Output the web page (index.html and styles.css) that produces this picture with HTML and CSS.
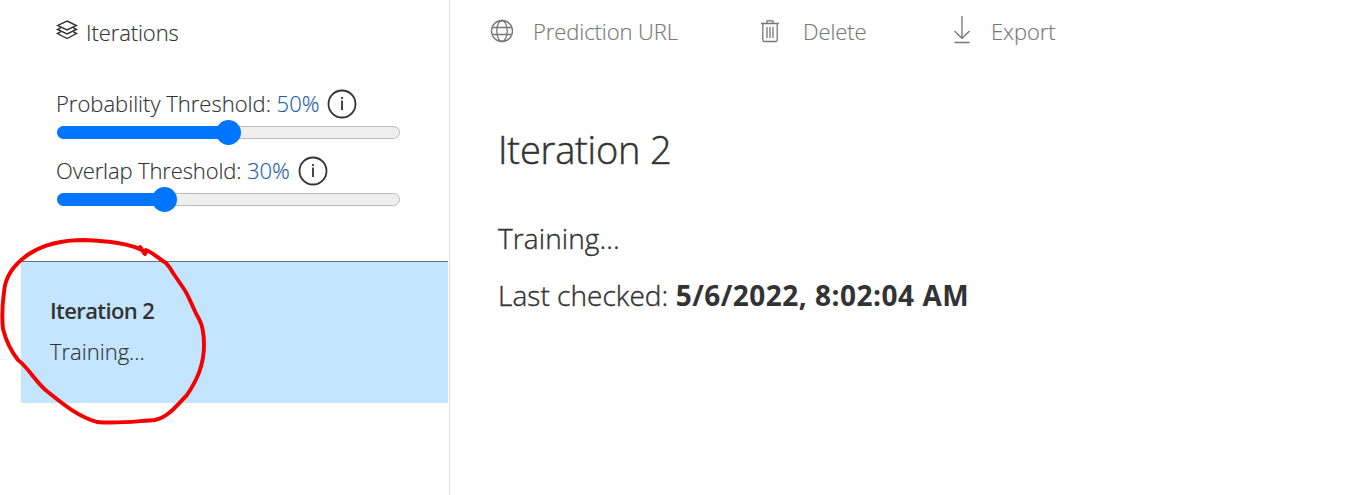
FILE: index.html
```html
<!DOCTYPE html>
<html lang="en">
<head>
<meta charset="utf-8">
<title>Iterations</title>
<link rel="stylesheet" href="styles.css">
</head>
<body>
<div class="app">
  <aside class="sidebar">
    <h2 class="side-title">
      <svg class="layers" width="22" height="20" viewBox="0 0 22 20"><path d="M11 1 20.500 5.500 11 10 1.500 5.500ZM4.500 8 1.500 9.500 11 14 20.500 9.500 17.500 8M4.500 12 1.500 13.500 11 18.500 20.500 13.500 17.500 12"/></svg>
      <span class="t-iterations">Iterations</span>
    </h2>
    <div class="threshold">
      <div class="label"><span class="t-prob">Probability Threshold: <b>50%</b></span>
        <svg class="info" width="30" height="30" viewBox="0 0 30 30"><circle cx="15" cy="15" r="13.500"/><path d="M15 11.500V21M15 8V10"/></svg>
      </div>
      <div class="track"><div class="fill" style="width:50%"></div><div class="thumb" style="left:50%"></div></div>
    </div>
    <div class="threshold">
      <div class="label"><span class="t-over">Overlap Threshold: <b>30%</b></span>
        <svg class="info" width="30" height="30" viewBox="0 0 30 30"><circle cx="15" cy="15" r="13.500"/><path d="M15 11.500V21M15 8V10"/></svg>
      </div>
      <div class="track"><div class="fill" style="width:31.500%"></div><div class="thumb" style="left:31.500%"></div></div>
    </div>
    <div class="card">
      <div class="card-name">Iteration 2</div>
      <div class="card-status">Training...</div>
    </div>
  </aside>
  <main class="main">
    <nav class="toolbar">
      <div class="tool tool-url">
        <svg width="24" height="24" viewBox="0 0 24 24"><circle cx="12" cy="12" r="10.500"/><ellipse cx="12" cy="12" rx="5.200" ry="10.500"/><path d="M2.500 8.500H21.500M2.500 15.500H21.500"/></svg>
        <span class="t-url">Prediction URL</span>
      </div>
      <div class="tool tool-delete">
        <svg width="20" height="24" viewBox="0 0 20 24"><path d="M1 4.500H19M7 4V1.800H13V4M2.800 5V21Q2.800 22.500 4.300 22.500H15.700Q17.200 22.500 17.200 21V5M7 8V19M10 8V19M13 8V19"/></svg>
        <span class="t-delete">Delete</span>
      </div>
      <div class="tool tool-export">
        <svg width="18" height="28" viewBox="0 0 18 28"><path d="M9 0V22M1.500 15 9 22.300 16.500 15M1.500 26.500H16.500"/></svg>
        <span class="t-export">Export</span>
      </div>
    </nav>
    <h1 class="title"><span>Iteration 2</span></h1>
    <p class="status"><span>Training...</span></p>
    <p class="checked"><span class="t-last">Last checked: </span><strong>5/6/2022, 8:02:04 AM</strong></p>
  </main>
  <svg class="mark" width="212" height="192" viewBox="0 236 212 192"><path d="M146 252C130 243 107 241 84 240C62 240 43 245 29 254C14 264 5 277 4 292C2 307 2 320 3 329C6 341 11 351 18 360C28 367 37 384 48 392C63 404 77 416 97 422C118 424 137 421 155 420C169 417 178 404 187 395C197 380 204 365 204 345C204 334 203 326 199 319C193 309 190 298 184 289L173 273L170 268L166 263C158 258 152 252 146 250L145 254L140 247"/></svg>
</div>
</body>
</html>
```
FILE: styles.css
```css
* { box-sizing: border-box; }
body { margin: 0; background: #fff; color: #333; font: 300 22px/30px "Open Sans", "Noto Sans", sans-serif; overflow: hidden; -webkit-text-stroke: 0.15px currentColor; }
svg { fill: none; stroke: currentColor; stroke-width: 1.4; flex: none; }
span, strong, .card-name, .card-status { white-space: pre; }
.app { position: relative; display: flex; width: 1345px; height: 495px; }
.sidebar { width: 450px; flex: none; border-right: 1px solid #ddd; padding: 17px 1px 0 21px; }
.side-title { display: flex; height: 30px; gap: 8px; margin: 0 0 41px; padding-left: 35px; font-size: 22px; font-weight: inherit; }
.layers { margin-top: 3px; }
.t-iterations { letter-spacing: -0.1px; }
.threshold { height: 67px; padding-left: 35px; }
.label { display: flex; gap: 8px; height: 30px; }
.label b { color: #1b5da8; font-weight: inherit; }
.info { stroke-width: 1.8; margin-top: 1px; }
.t-prob { letter-spacing: 0; }
.t-over { letter-spacing: -0.120px; }
.track { position: relative; width: 343px; height: 13px; margin: 8px 0 0 0.500px; border: 1px solid #bcbcbc; border-radius: 7px; background: #efefef; }
.fill { height: 13px; margin: -1px 0 0 -1px; border-radius: 7px; background: #0075ff; }
.thumb { position: absolute; top: -7px; width: 25px; height: 25px; margin-left: -12.500px; border-radius: 50%; background: #0075ff; }
.card { height: 142px; margin-top: 39px; padding: 33px 29px; border-top: 1px solid #66727b; background: #c3e5ff; }
.card-name { font-weight: 600; letter-spacing: -0.6px; margin-bottom: 11px; -webkit-text-stroke: 0; }
.card-status { letter-spacing: 0; }
.main { flex: 1; padding: 16px 0 0 48px; }
.toolbar { display: flex; height: 30px; margin-left: -8px; color: #777; }
.tool { display: flex; align-items: center; }
.tool-url { width: 270px; gap: 19px; }
.tool-delete { width: 193px; gap: 23px; }
.tool-export { gap: 20px; }
.tool svg { stroke-width: 1.3; }
.tool-export svg { margin-top: -3px; }
.t-url { letter-spacing: -0.080px; }
.t-delete, .t-export { letter-spacing: -0.100px; }
.title { margin: 77px 0 0; font-size: 38px; line-height: 52px; font-weight: 300; letter-spacing: -0.2px; -webkit-text-stroke-width: 0.5px; }
.status { margin: 43px 0 0; font-size: 28px; line-height: 40px; letter-spacing: 0.1px; -webkit-text-stroke-width: 0.4px; }
.checked { margin: 17px 0 0; font-size: 28px; line-height: 40px; letter-spacing: 0.05px; -webkit-text-stroke-width: 0.4px; }
.checked strong { font-weight: 700; letter-spacing: 0.5px; -webkit-text-stroke: 0; }
.mark { position: absolute; left: 0; top: 236px; color: #f40000; stroke-width: 3.900; stroke-linecap: round; stroke-linejoin: round; }
```
